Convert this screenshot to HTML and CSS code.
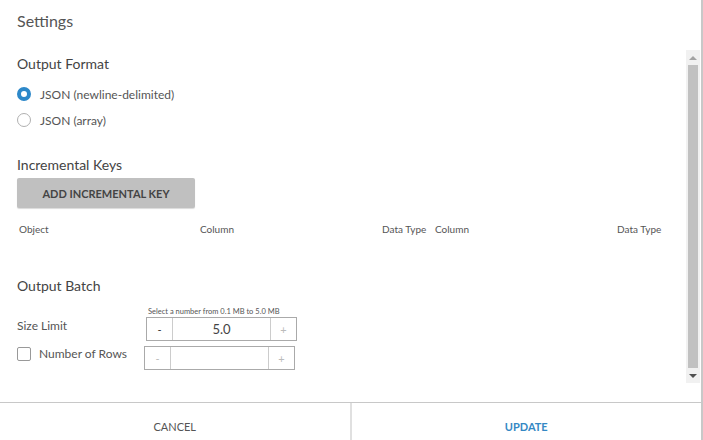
FILE: index.html
```html
<!DOCTYPE html>
<html lang="en">
<head>
    <meta charset="UTF-8">
    <title>Settings</title>
    <link rel="stylesheet" href="styles.css">
</head>
<body>
    <div class="dialog">
        <div class="dialog-head">Settings</div>

        <div class="scroll-area">
            <div class="content">
                <h3 class="section-title">Output Format</h3>
                <label class="radio-row">
                    <span class="radio checked"></span>
                    JSON (newline-delimited)
                </label>
                <label class="radio-row">
                    <span class="radio"></span>
                    JSON (array)
                </label>

                <h3 class="section-title keys-title">Incremental Keys</h3>
                <button class="add-key-btn">ADD INCREMENTAL KEY</button>
                <div class="keys-head">
                    <span>Object</span>
                    <span>Column</span>
                    <span>Data Type</span>
                    <span>Column</span>
                    <span>Data Type</span>
                </div>

                <h3 class="section-title batch-title">Output Batch</h3>
                <div class="batch-row">
                    <span class="batch-label">Size Limit</span>
                    <div class="stepper-wrap">
                        <div class="hint">Select a number from 0.1 MB to 5.0 MB</div>
                        <div class="stepper">
                            <span class="step-btn dark">-</span>
                            <span class="step-value">5.0</span>
                            <span class="step-btn">+</span>
                        </div>
                    </div>
                </div>
                <div class="batch-row rows-row">
                    <label class="check-label">
                        <span class="checkbox"></span>
                        Number of Rows
                    </label>
                    <div class="stepper second">
                        <span class="step-btn">-</span>
                        <span class="step-value"></span>
                        <span class="step-btn">+</span>
                    </div>
                </div>
            </div>

            <div class="scrollbar">
                <span class="arrow up"></span>
                <span class="thumb"></span>
                <span class="arrow down"></span>
            </div>
        </div>

        <div class="dialog-foot">
            <button class="foot-btn">CANCEL</button>
            <button class="foot-btn primary">UPDATE</button>
        </div>
    </div>
</body>
</html>
```

FILE: styles.css
```css
* {
    margin: 0;
    padding: 0;
    box-sizing: border-box;
    font-family: 'Lato', sans-serif;
}

body {
    width: 703px;
    height: 440px;
    background: #fff;
    overflow: hidden;
}

.dialog {
    width: 703px;
    height: 440px;
    border-right: 2px solid #c8c8c8;
    display: flex;
    flex-direction: column;
}

.dialog-head {
    height: 50px;
    padding: 11px 0 0 17px;
    font-size: 16px;
    color: #555;
}

.scroll-area {
    display: flex;
    height: 333px;
}

.content {
    flex: 1;
    padding-left: 17px;
}

.section-title {
    font-size: 14px;
    font-weight: normal;
    color: #444;
    margin-top: 5px;
    margin-bottom: 9px;
}

.radio-row {
    display: flex;
    align-items: center;
    gap: 9px;
    height: 26px;
    font-size: 12px;
    color: #555;
}

.radio {
    width: 14px;
    height: 14px;
    border-radius: 50%;
    border: 1px solid #b0b0b0;
}

.radio.checked {
    border: 4px solid #2d88c9;
}

.keys-title {
    margin-top: 23px;
    margin-bottom: 5px;
}

.add-key-btn {
    width: 178px;
    height: 30px;
    border: none;
    border-radius: 2px;
    background: #c0c0c0;
    color: #444;
    font-size: 11px;
    font-weight: bold;
    box-shadow: 0 1px 1px rgba(0, 0, 0, 0.15);
}

.keys-head {
    display: grid;
    grid-template-columns: 181px 182px 53px 182px auto;
    padding-left: 2px;
    margin-top: 15px;
    font-size: 10px;
    color: #555;
}

.batch-title {
    margin-top: 42px;
    margin-bottom: 13px;
}

.batch-row {
    display: flex;
    align-items: flex-end;
}

.batch-label {
    width: 129px;
    font-size: 12px;
    color: #555;
    margin-bottom: 8px;
}

.hint {
    font-size: 7.5px;
    color: #555;
    padding-left: 2px;
    margin-bottom: 1px;
}

.stepper {
    display: flex;
    width: 151px;
    height: 24px;
    border: 1px solid #aaa;
}

.step-btn {
    width: 26px;
    display: flex;
    align-items: center;
    justify-content: center;
    font-size: 11px;
    color: #bbb;
}

.step-btn:first-child {
    border-right: 1px solid #ccc;
}

.step-btn:last-child {
    border-left: 1px solid #ccc;
}

.step-btn.dark {
    color: #333;
}

.step-value {
    flex: 1;
    display: flex;
    align-items: center;
    justify-content: center;
    font-size: 13px;
    color: #444;
}

.rows-row {
    align-items: flex-start;
    margin-top: 5px;
}

.check-label {
    width: 127px;
    display: flex;
    align-items: center;
    gap: 8px;
    font-size: 12px;
    color: #555;
}

.checkbox {
    width: 14px;
    height: 14px;
    border: 1px solid #999;
    border-radius: 2px;
}

.scrollbar {
    width: 14px;
    margin-right: 1px;
    background: #f1f1f1;
    display: flex;
    flex-direction: column;
    align-items: center;
}

.arrow {
    height: 15px;
    width: 100%;
    display: flex;
    align-items: center;
    justify-content: center;
}

.arrow::before {
    content: "";
    border-left: 4px solid transparent;
    border-right: 4px solid transparent;
}

.arrow.up::before {
    border-bottom: 4px solid #a3a3a3;
}

.arrow.down::before {
    border-top: 4px solid #505050;
}

.thumb {
    flex: 1;
    width: 10px;
    background: #c1c1c1;
}

.dialog-foot {
    margin-top: auto;
    height: 38px;
    border-top: 1px solid #c8c8c8;
    display: flex;
}

.foot-btn {
    flex: 1;
    border: none;
    background: #fff;
    padding-top: 10px;
    font-size: 11px;
    color: #555;
}

.foot-btn.primary {
    border-left: 2px solid #e0e0e0;
    color: #3488c4;
    font-weight: bold;
}
```
